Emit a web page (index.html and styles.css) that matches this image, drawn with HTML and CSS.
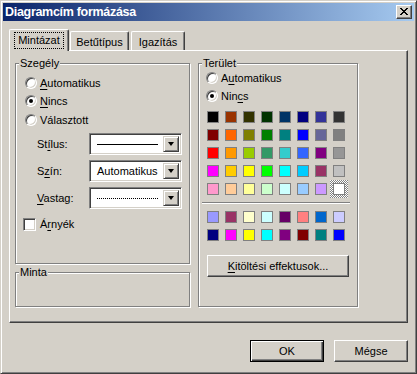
FILE: index.html
```html
<!DOCTYPE html>
<html lang="hu">
<head>
<meta charset="utf-8">
<title>Diagramcím formázása</title>
<link rel="stylesheet" href="styles.css">
</head>
<body>
<div class="window">
  <div class="titlebar">
    <span class="title">Diagramcím formázása</span>
    <span class="close">
      <svg width="8" height="7" viewBox="0 0 8 7" shape-rendering="crispEdges">
        <rect x="0" y="0" width="2" height="1"/><rect x="6" y="0" width="2" height="1"/>
        <rect x="1" y="1" width="2" height="1"/><rect x="5" y="1" width="2" height="1"/>
        <rect x="2" y="2" width="4" height="1"/>
        <rect x="3" y="3" width="2" height="1"/>
        <rect x="2" y="4" width="4" height="1"/>
        <rect x="1" y="5" width="2" height="1"/><rect x="5" y="5" width="2" height="1"/>
        <rect x="0" y="6" width="2" height="1"/><rect x="6" y="6" width="2" height="1"/>
      </svg>
    </span>
  </div>
  <div class="body">
    <div class="tabs">
      <div class="tab active"><span class="focus">Mintázat</span></div>
      <div class="tab t2">Betűtípus</div>
      <div class="tab t3">Igazítás</div>
    </div>
    <div class="panel">
      <div class="col-left">
        <div class="group szegely">
          <span class="legend">Szegély</span>
          <div class="opt s1"><span class="radio"></span><span class="lbl"><u>A</u>utomatikus</span></div>
          <div class="opt s2"><span class="radio on"></span><span class="lbl"><u>N</u>incs</span></div>
          <div class="opt s3"><span class="radio"></span><span class="lbl">Választott</span></div>
          <div class="field f1">
            <span class="flabel">St<u>í</u>lus:</span>
            <div class="combo"><span class="val"><span class="line solid"></span></span><span class="arrow"><span class="tri"></span></span></div>
          </div>
          <div class="field f2">
            <span class="flabel">S<u>z</u>ín:</span>
            <div class="combo"><span class="val">Automatikus</span><span class="arrow"><span class="tri"></span></span></div>
          </div>
          <div class="field f3">
            <span class="flabel"><u>V</u>astag:</span>
            <div class="combo"><span class="val"><span class="line dotted"></span></span><span class="arrow"><span class="tri"></span></span></div>
          </div>
          <div class="opt chk"><span class="checkbox"></span><span class="lbl">Á<u>r</u>nyék</span></div>
        </div>
        <div class="group minta"><span class="legend">Minta</span></div>
      </div>
      <div class="group terulet">
        <span class="legend">Terület</span>
        <div class="opt t-1"><span class="radio"></span><span class="lbl">A<u>u</u>tomatikus</span></div>
        <div class="opt t-2"><span class="radio on"></span><span class="lbl">Nin<u>c</u>s</span></div>
        <div class="swatches main">
          <span class="sw" style="background:#000000"></span>
          <span class="sw" style="background:#993300"></span>
          <span class="sw" style="background:#333300"></span>
          <span class="sw" style="background:#003300"></span>
          <span class="sw" style="background:#003366"></span>
          <span class="sw" style="background:#000080"></span>
          <span class="sw" style="background:#333399"></span>
          <span class="sw" style="background:#333333"></span>
          <span class="sw" style="background:#800000"></span>
          <span class="sw" style="background:#ff6600"></span>
          <span class="sw" style="background:#808000"></span>
          <span class="sw" style="background:#008000"></span>
          <span class="sw" style="background:#008080"></span>
          <span class="sw" style="background:#0000ff"></span>
          <span class="sw" style="background:#666699"></span>
          <span class="sw" style="background:#808080"></span>
          <span class="sw" style="background:#ff0000"></span>
          <span class="sw" style="background:#ff9900"></span>
          <span class="sw" style="background:#99cc00"></span>
          <span class="sw" style="background:#339966"></span>
          <span class="sw" style="background:#33cccc"></span>
          <span class="sw" style="background:#3366ff"></span>
          <span class="sw" style="background:#800080"></span>
          <span class="sw" style="background:#969696"></span>
          <span class="sw" style="background:#ff00ff"></span>
          <span class="sw" style="background:#ffcc00"></span>
          <span class="sw" style="background:#ffff00"></span>
          <span class="sw" style="background:#00ff00"></span>
          <span class="sw" style="background:#00ffff"></span>
          <span class="sw" style="background:#00ccff"></span>
          <span class="sw" style="background:#993366"></span>
          <span class="sw" style="background:#c0c0c0"></span>
          <span class="sw" style="background:#ff99cc"></span>
          <span class="sw" style="background:#ffcc99"></span>
          <span class="sw" style="background:#ffff99"></span>
          <span class="sw" style="background:#ccffcc"></span>
          <span class="sw" style="background:#ccffff"></span>
          <span class="sw" style="background:#99ccff"></span>
          <span class="sw" style="background:#cc99ff"></span>
          <span class="sw selected"></span>
        </div>
        <div class="sep"></div>
        <div class="swatches extra">
          <span class="sw" style="background:#9999ff"></span>
          <span class="sw" style="background:#993366"></span>
          <span class="sw" style="background:#ffffcc"></span>
          <span class="sw" style="background:#ccffff"></span>
          <span class="sw" style="background:#660066"></span>
          <span class="sw" style="background:#ff8080"></span>
          <span class="sw" style="background:#0066cc"></span>
          <span class="sw" style="background:#ccccff"></span>
          <span class="sw" style="background:#000080"></span>
          <span class="sw" style="background:#ff00ff"></span>
          <span class="sw" style="background:#ffff00"></span>
          <span class="sw" style="background:#00ffff"></span>
          <span class="sw" style="background:#800080"></span>
          <span class="sw" style="background:#800000"></span>
          <span class="sw" style="background:#008080"></span>
          <span class="sw" style="background:#0000ff"></span>
        </div>
        <div class="btn fill"><span><u>K</u>itöltési effektusok...</span></div>
      </div>
    </div>
    <div class="buttons">
      <div class="btn default"><span>OK</span></div>
      <div class="btn"><span>Mégse</span></div>
    </div>
  </div>
</div>
</body>
</html>
```

FILE: styles.css
```css
* { box-sizing: border-box; }

html, body {
  margin: 0;
  padding: 0;
  background: #d4d0c8;
}

body {
  font-family: "Liberation Sans", Arial, sans-serif;
  font-size: 11px;
  line-height: 13px;
  color: #000;
}

u { text-decoration: underline; text-underline-offset: 2px; }

.window {
  width: 417px;
  height: 374px;
  display: flex;
  flex-direction: column;
  background: #d4d0c8;
  border: 1px solid;
  border-color: #d4d0c8 #404040 #404040 #d4d0c8;
  box-shadow: inset 1px 1px #fff, inset -1px -1px #808080;
  padding: 2px;
}

/* Title bar */
.titlebar {
  height: 18px;
  flex: none;
  display: flex;
  align-items: center;
  justify-content: space-between;
  padding: 0 2px 0 2px;
  background: linear-gradient(to right, #0a246a, #a6caf0);
}

.title {
  color: #fff;
  font-weight: bold;
  font-size: 12.5px;
  letter-spacing: -0.3px;
  line-height: 14px;
}

.close {
  width: 16px;
  height: 14px;
  display: flex;
  align-items: center;
  justify-content: center;
  background: #d4d0c8;
  border: 1px solid;
  border-color: #fff #404040 #404040 #fff;
  box-shadow: inset -1px -1px #808080;
  padding-bottom: 1px;
}

.close svg { display: block; fill: #000; }

/* Body */
.body {
  flex: 1;
  display: flex;
  flex-direction: column;
  padding: 8px 6px 0 6px;
}

/* Tabs */
.tabs {
  height: 21px;
  display: flex;
  align-items: flex-end;
  position: relative;
  z-index: 1;
}

.tab {
  height: 19px;
  display: flex;
  align-items: center;
  justify-content: center;
  padding-top: 2px;
  background: #d4d0c8;
  border-top: 1px solid #fff;
  border-left: 1px solid #fff;
  border-right: 1px solid #404040;
  box-shadow: inset -1px 0 #808080;
  border-radius: 2px 2px 0 0;
}

.tab.active {
  width: 60px;
  height: 22px;
  margin-bottom: -1px;
  padding-top: 0;
  padding-bottom: 1px;
}

.tab.t2 { width: 59px; margin-left: 1px; }
.tab.t3 { width: 54px; margin-left: 2px; }

.focus {
  outline: 1px dotted #000;
  padding: 1px 3px 1px 3px;
}

/* Panel */
.panel {
  height: 273px;
  flex: none;
  display: flex;
  gap: 8px;
  padding: 12px 0 0 5px;
  border: 1px solid;
  border-color: #fff #404040 #404040 #fff;
  box-shadow: inset -1px -1px #808080;
}

.col-left {
  width: 175px;
  display: flex;
  flex-direction: column;
  gap: 8px;
}

.group {
  position: relative;
  border: 1px solid #808080;
  box-shadow: inset 1px 1px #fff, 1px 1px #fff;
  display: flex;
  flex-direction: column;
}

.legend {
  position: absolute;
  top: -7px;
  left: 3px;
  padding: 0 1px;
  background: #d4d0c8;
  line-height: 13px;
}

.szegely { height: 201px; padding: 10px 0 0 9px; }
.minta { height: 35px; }
.terulet { width: 160px; height: 244px; padding: 5px 0 0 7px; }

/* Options */
.opt {
  height: 18px;
  display: flex;
  align-items: center;
}

.opt .lbl { margin-left: 3px; }

.s3 { margin-top: 1px; }

.radio {
  position: relative;
  width: 12px;
  height: 12px;
  flex: none;
  border-radius: 50%;
  background: #fff;
  border: 1px solid;
  border-color: #808080 #fff #fff #808080;
  box-shadow: inset 1px 1px #404040, inset -1px -1px #d4d0c8;
}

.radio.on::after {
  content: "";
  position: absolute;
  left: 3px;
  top: 3px;
  width: 4px;
  height: 4px;
  border-radius: 50%;
  background: #000;
}

.checkbox {
  width: 13px;
  height: 13px;
  flex: none;
  background: #fff;
  border: 1px solid;
  border-color: #808080 #fff #fff #808080;
  box-shadow: inset 1px 1px #404040, inset -1px -1px #d4d0c8;
}

.chk { margin-top: 6px; margin-left: -2px; }
.chk .lbl { margin-left: 4px; }

/* Fields with combo boxes */
.field {
  height: 22px;
  display: flex;
  align-items: center;
  padding-left: 12px;
}

.f1 { margin-top: 4px; }
.f2, .f3 { margin-top: 5px; }

.flabel { width: 52px; flex: none; }

.combo {
  width: 93px;
  height: 22px;
  display: flex;
  align-items: stretch;
  padding: 2px;
  background: #fff;
  border: 1px solid;
  border-color: #808080 #fff #fff #808080;
  box-shadow: inset 1px 1px #404040, inset -1px -1px #d4d0c8;
}

.val {
  flex: 1;
  display: flex;
  align-items: center;
  padding-left: 5px;
}

.line { display: block; width: 61px; height: 0; }
.line.solid { border-top: 1px solid #000; }
.line.dotted { border-top: 1px dotted #000; }

.arrow {
  width: 16px;
  flex: none;
  display: flex;
  align-items: center;
  justify-content: center;
  background: #d4d0c8;
  border: 1px solid;
  border-color: #d4d0c8 #404040 #404040 #d4d0c8;
  box-shadow: inset 1px 1px #fff, inset -1px -1px #808080;
}

.tri {
  width: 0;
  height: 0;
  border-left: 3.5px solid transparent;
  border-right: 3.5px solid transparent;
  border-top: 4px solid #000;
}

/* Swatches */
.swatches {
  display: grid;
  grid-template-columns: repeat(8, 12px);
  gap: 6px;
  margin-left: 1px;
}

.swatches.main { margin-top: 6px; }
.swatches.extra { margin-top: 7px; }

.sw {
  width: 12px;
  height: 12px;
  border: 1px solid #808080;
}

.sw.selected {
  width: 18px;
  height: 18px;
  margin: -3px;
  border: 3px solid transparent;
  background:
    linear-gradient(#fff, #fff) padding-box,
    repeating-conic-gradient(#808080 0 25%, #fff 0 50%) 0 0 / 2px 2px border-box;
  box-shadow: inset 0 0 0 1px #808080;
}

.sep {
  width: 148px;
  height: 2px;
  margin: 7px 0 0 -4px;
  border-top: 1px solid #808080;
  border-bottom: 1px solid #fff;
}

/* Buttons */
.btn {
  display: flex;
  align-items: center;
  justify-content: center;
  height: 22px;
  background: #d4d0c8;
  border: 1px solid;
  border-color: #fff #404040 #404040 #fff;
  box-shadow: inset -1px -1px #808080;
}

.btn.fill {
  width: 142px;
  margin: 14px 0 0 1px;
}

.buttons {
  display: flex;
  justify-content: flex-end;
  gap: 10px;
  margin-top: 17px;
}

.buttons .btn { width: 74px; }

.btn.default {
  border-color: #000;
  box-shadow: inset 1px 1px #fff, inset -1px -1px #404040, inset -2px -2px #808080;
}
```
